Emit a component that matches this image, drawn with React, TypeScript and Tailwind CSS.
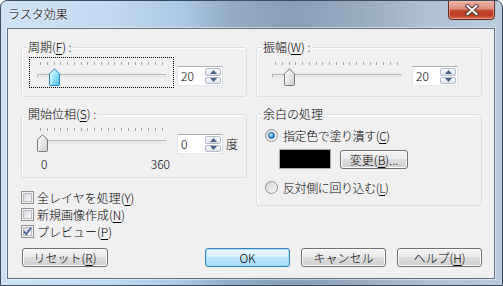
import React from "react";

const Acc = ({ c }: { c: string }) => (
  <span className="underline decoration-1 underline-offset-[2px]">{c}</span>
);

function Thumb({ blue, left }: { blue?: boolean; left: string }) {
  return (
    <svg
      width="11"
      height="18"
      viewBox="0 0 11 18"
      className={left === "19" ? "absolute left-[19px] top-[10px]" : "absolute left-[7px] top-[10px]"}
    >
      <defs>
        <linearGradient id="tb" x1="0" y1="0" x2="1" y2="1">
          <stop offset="0" stopColor="#e8fbff" />
          <stop offset="0.45" stopColor="#9fe6fb" />
          <stop offset="1" stopColor="#46bde9" />
        </linearGradient>
        <linearGradient id="tg" x1="0" y1="0" x2="1" y2="1">
          <stop offset="0" stopColor="#fbfbfb" />
          <stop offset="0.5" stopColor="#e6e6e6" />
          <stop offset="1" stopColor="#cfcfcf" />
        </linearGradient>
      </defs>
      <path
        d="M1.5 17.5 Q0.5 17.5 0.5 16.5 V5.8 L5.5 0.8 L10.5 5.8 V16.5 Q10.5 17.5 9.5 17.5 Z"
        fill={blue ? "url(#tb)" : "url(#tg)"}
        stroke={blue ? "#2a86c2" : "#767676"}
        strokeWidth="1"
      />
      <path
        d="M2 16 V6.4 L5.5 2.6"
        fill="none"
        stroke="#ffffff"
        strokeOpacity="0.8"
        strokeWidth="1"
      />
    </svg>
  );
}

function SliderArea({ focus, blue, thumbLeft }: { focus?: boolean; blue?: boolean; thumbLeft: string }) {
  const ticks = Array.from({ length: 19 });
  return (
    <div
      className={
        focus
          ? "relative h-[31px] w-[145px] border border-dotted border-black"
          : "relative h-[31px] w-[145px] border border-transparent"
      }
    >
      <div className="absolute left-[10px] top-[4px] flex h-[3px] w-[123px] justify-between">
        {ticks.map((_, i) => (
          <div key={i} className="h-[3px] w-[1px] bg-[#a3a3a3]" />
        ))}
      </div>
      <div className="absolute left-[7px] top-[16px] h-[4px] w-[130px] border border-[#b4b4b4] border-b-[#e8e8e8] border-r-[#e8e8e8] bg-[#e7eaea]" />
      <Thumb blue={blue} left={thumbLeft} />
    </div>
  );
}

function SpinBtn({ up }: { up?: boolean }) {
  return (
    <div className="flex flex-1 items-center justify-center rounded-[2px] border border-[#b4bccb] bg-[linear-gradient(to_bottom,#f7f8fa_0%,#eceff3_50%,#dfe4ea_100%)]">
      <svg width="7" height="4" viewBox="0 0 7 4">
        {up ? <path d="M0 4 L3.5 0 L7 4 Z" fill="#4a5f86" /> : <path d="M0 0 L3.5 4 L7 0 Z" fill="#4a5f86" />}
      </svg>
    </div>
  );
}

function Spin({ v }: { v: string }) {
  return (
    <div className="flex h-[20px] w-[46px] border border-[#abadb3] border-b-[#e3e9ef] border-l-[#e2e3ea] border-r-[#dbdfe6] bg-white">
      <div className="flex-1 pl-[3px] text-[12px] leading-[18px]">{v}</div>
      <div className="flex w-[17px] flex-col gap-[1px] p-[1px] pl-0">
        <SpinBtn up />
        <SpinBtn />
      </div>
    </div>
  );
}

function Group({
  label,
  className,
  children,
}: {
  label: React.ReactNode;
  className: string;
  children?: React.ReactNode;
}) {
  return (
    <div className={className}>
      <div className="absolute left-[5px] top-[-8px] bg-[#f0f0f0] px-[1px] text-[12px] leading-[14px]">
        {label}
      </div>
      {children}
    </div>
  );
}

function Btn({ children, def, w }: { children: React.ReactNode; def?: boolean; w: "85" | "86" | "68" }) {
  const width = w === "85" ? "w-[85px]" : w === "86" ? "w-[86px]" : "w-[68px]";
  return (
    <div
      className={
        def
          ? `${width} flex h-[19px] items-center justify-center rounded-[3px] border border-[#3c7fb1] bg-[linear-gradient(to_bottom,#eaf6fd_0%,#d9f0fc_50%,#bee6fd_50%,#a7d9f5_100%)] text-[12px] leading-[14px] shadow-[inset_0_0_0_1px_#9fe3fb]`
          : `${width} flex h-[19px] items-center justify-center rounded-[3px] border border-[#707070] bg-[linear-gradient(to_bottom,#f2f2f2_0%,#ebebeb_50%,#dddddd_50%,#cfcfcf_100%)] text-[12px] leading-[14px] shadow-[inset_0_0_0_1px_#fcfcfc]`
      }
    >
      {children}
    </div>
  );
}

function Check({ checked }: { checked?: boolean }) {
  return (
    <div className="relative h-[13px] w-[13px] border border-[#8e8f8f] bg-[#f4f4f4] p-[1px]">
      <div className="h-full w-full border border-[#b9bdc2] bg-[linear-gradient(135deg,#d3d6db_0%,#eceef0_60%,#fafafa_100%)]" />
      {checked && (
        <svg width="11" height="11" viewBox="0 0 11 11" className="absolute left-0 top-0">
          <path d="M2 5.5 L4.3 8.2 L9 1.8" fill="none" stroke="#3d5a99" strokeWidth="1.7" />
        </svg>
      )}
    </div>
  );
}

function Radio({ checked }: { checked?: boolean }) {
  return (
    <div className="flex h-[13px] w-[13px] items-center justify-center rounded-full border border-[#8e8f8f] bg-[linear-gradient(135deg,#cfd1d4_0%,#eeeeee_60%,#fbfbfb_100%)]">
      {checked ? (
        <div className="h-[7px] w-[7px] rounded-full border border-[#1f5f9c] bg-[radial-gradient(circle_at_35%_35%,#c5f0ff_0%,#3ea0e2_50%,#0f5aa5_100%)]" />
      ) : (
        <div className="h-[9px] w-[9px] rounded-full bg-[linear-gradient(135deg,#d6d8db_0%,#f4f4f4_100%)]" />
      )}
    </div>
  );
}

export default function App() {
  return (
    <div className="relative h-[286px] w-[503px] overflow-hidden rounded-t-[7px] border border-[#3e4d5d] bg-[linear-gradient(to_right,#cde2f6_0%,#c1d9f0_22%,#adc8e3_36%,#93abc4_46%,#889fb7_58%,#98acc1_72%,#afc2d5_86%,#b9cbdd_100%)] font-['Noto_Sans_CJK_JP','Noto_Sans',sans-serif] font-light text-black">
      {/* Title bar */}
      <div className="h-[27px] pl-[7px] pt-[6px] text-[12px] leading-[14px] [text-shadow:0_0_5px_#ffffff,0_0_3px_#ffffff]">
        ラスタ効果
      </div>
      {/* Close button */}
      <div className="absolute right-[7px] top-[-1px] flex h-[20px] w-[47px] items-center justify-center rounded-b-[4px] border border-[#5b2a22] bg-[linear-gradient(to_bottom,#ebb2a4_0%,#dc8d7c_45%,#c6462f_52%,#bf3a22_78%,#d96a4e_100%)] shadow-[inset_0_0_0_1px_rgba(255,200,190,0.5)]">
        <svg width="14" height="12" viewBox="0 0 14 12">
          <path d="M2.5 2 L11.5 10 M11.5 2 L2.5 10" stroke="#4a3530" strokeWidth="4" strokeLinecap="square" />
          <path d="M2.5 2 L11.5 10 M11.5 2 L2.5 10" stroke="#ffffff" strokeWidth="2" strokeLinecap="square" />
        </svg>
      </div>

      {/* Client area */}
      <div className="ml-[6px] mr-[7px] h-[251px] border border-[#5f7285] bg-[#f0f0f0] shadow-[0_0_0_1px_rgba(255,255,255,0.45)]">
        <div className="flex gap-[9px] pl-[13px] pt-[18px]">
          {/* Left column */}
          <div className="flex w-[226px] flex-col">
            <Group
              className="relative h-[50px] w-[226px] rounded-[3px] border border-[#d5dfe5] shadow-[inset_1px_1px_0_#ffffff]"
              label={
                <>
                  周期(<Acc c="F" />) :
                </>
              }
            >
              <div className="flex pl-[7px] pt-[9px]">
                <SliderArea focus blue thumbLeft="19" />
                <div className="ml-[3px] mt-[9px]">
                  <Spin v="20" />
                </div>
              </div>
            </Group>

            <Group
              className="relative mt-[17px] h-[64px] w-[226px] rounded-[3px] border border-[#d5dfe5] shadow-[inset_1px_1px_0_#ffffff]"
              label={
                <>
                  開始位相(<Acc c="S" />) :
                </>
              }
            >
              <div className="flex pl-[7px] pt-[8px]">
                <SliderArea thumbLeft="7" />
                <div className="ml-[3px] mt-[11px] flex items-center">
                  <Spin v="0" />
                  <span className="ml-[3px] text-[12px] leading-[14px]">度</span>
                </div>
              </div>
              <div className="mt-[3px] flex w-[148px] justify-between pl-[19px] text-[12px] leading-[14px]">
                <span>0</span>
                <span>360</span>
              </div>
            </Group>

            <div className="mt-[11px] flex flex-col text-[12px] leading-[14px]">
              <div className="flex h-[17px] items-center gap-[3px]">
                <Check />
                <span>
                  全レイヤを処理(<Acc c="Y" />)
                </span>
              </div>
              <div className="flex h-[17px] items-center gap-[3px]">
                <Check />
                <span>
                  新規画像作成(<Acc c="N" />)
                </span>
              </div>
              <div className="flex h-[17px] items-center gap-[3px]">
                <Check checked />
                <span>
                  プレビュー(<Acc c="P" />)
                </span>
              </div>
            </div>
          </div>

          {/* Right column */}
          <div className="flex w-[226px] flex-col">
            <Group
              className="relative h-[50px] w-[226px] rounded-[3px] border border-[#d5dfe5] shadow-[inset_1px_1px_0_#ffffff]"
              label={
                <>
                  振幅(<Acc c="W" />) :
                </>
              }
            >
              <div className="flex pl-[7px] pt-[9px]">
                <SliderArea thumbLeft="19" />
                <div className="ml-[3px] mt-[9px]">
                  <Spin v="20" />
                </div>
              </div>
            </Group>

            <Group
              className="relative mt-[17px] h-[92px] w-[226px] rounded-[3px] border border-[#d5dfe5] shadow-[inset_1px_1px_0_#ffffff]"
              label={<>余白の処理</>}
            >
              <div className="flex flex-col text-[12px] leading-[14px]">
                <div className="mt-[12px] flex h-[17px] items-center gap-[5px] pl-[8px]">
                  <Radio checked />
                  <span className="tracking-[-0.4px]">
                    指定色で塗り潰す(<Acc c="C" />)
                  </span>
                </div>
                <div className="mt-[5px] flex items-start pl-[22px]">
                  <div className="h-[20px] w-[52px] border border-[#a9a9a9] bg-black" />
                  <div className="ml-[9px] mt-[1px]">
                    <Btn w="68">
                      変更(<Acc c="B" />)...
                    </Btn>
                  </div>
                </div>
                <div className="mt-[10px] flex h-[17px] items-center gap-[5px] pl-[8px]">
                  <Radio />
                  <span className="tracking-[-0.4px]">
                    反対側に回り込む(<Acc c="L" />)
                  </span>
                </div>
              </div>
            </Group>
          </div>
        </div>

        {/* Buttons */}
        <div className="mt-[8px] flex pl-[14px]">
          <Btn w="86">
            リセット(<Acc c="R" />)
          </Btn>
          <div className="ml-[97px] flex gap-[11px]">
            <Btn def w="85">
              OK
            </Btn>
            <Btn w="85">キャンセル</Btn>
            <Btn w="85">
              ヘルプ(<Acc c="H" />)
            </Btn>
          </div>
        </div>
      </div>
    </div>
  );
}
